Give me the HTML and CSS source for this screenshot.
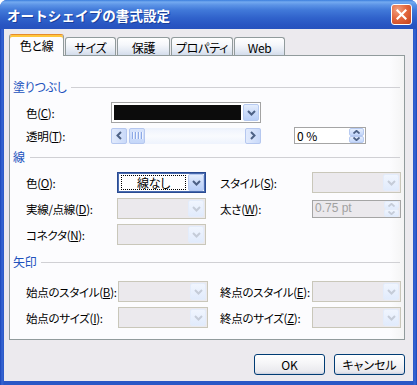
FILE: index.html
```html
<!DOCTYPE html>
<html lang="ja">
<head>
<meta charset="utf-8">
<title>オートシェイプの書式設定</title>
<link rel="stylesheet" href="styles.css">
</head>
<body>
<div class="window">
  <div class="titlebar">
    <span class="title">オートシェイプの書式設定</span>
    <div class="close">
      <svg width="11" height="11" viewBox="0 0 11 11"><path d="M1.5 1.5 L9.5 9.5 M9.5 1.5 L1.5 9.5" stroke="#fff" stroke-width="2.2" fill="none" stroke-linecap="square"/></svg>
    </div>
  </div>
  <div class="client">
    <div class="tabs">
      <div class="tab active t1">色と線</div>
      <div class="tab t2">サイズ</div>
      <div class="tab t3">保護</div>
      <div class="tab t4">プロパティ</div>
      <div class="tab t5">Web</div>
    </div>
    <div class="panel">
      <div class="heading">塗りつぶし</div>
      <div class="row fill r1">
        <span class="label">色(<u>C</u>):</span>
        <div class="combo color">
          <div class="swatch"></div>
          <div class="drop"><svg width="9" height="6" viewBox="0 0 9 6"><polyline points="1,1 4.5,4.5 8,1" fill="none" stroke="#4D6185" stroke-width="2"/></svg></div>
        </div>
      </div>
      <div class="row fill r2">
        <span class="label">透明(<u>T</u>):</span>
        <div class="scrollbar">
          <div class="sbtn"><svg width="6" height="9" viewBox="0 0 6 9"><polyline points="5,1 1.5,4.5 5,8" fill="none" stroke="#4D6185" stroke-width="2"/></svg></div>
          <div class="thumb"><i></i><i></i><i></i><i></i></div>
          <div class="track"></div>
          <div class="sbtn"><svg width="6" height="9" viewBox="0 0 6 9"><polyline points="1,1 4.5,4.5 1,8" fill="none" stroke="#4D6185" stroke-width="2"/></svg></div>
        </div>
        <span></span>
        <div class="spin">
          <span class="val">0 %</span>
          <div class="spinbtns">
            <div class="sp"><svg width="7" height="4" viewBox="0 0 7 4"><polyline points="0.5,3.5 3.5,0.8 6.5,3.5" fill="none" stroke="#4D6185" stroke-width="1.8"/></svg></div>
            <div class="sp"><svg width="7" height="4" viewBox="0 0 7 4"><polyline points="0.5,0.5 3.5,3.2 6.5,0.5" fill="none" stroke="#4D6185" stroke-width="1.8"/></svg></div>
          </div>
        </div>
      </div>

      <div class="heading h2">線</div>
      <div class="row line r1">
        <span class="label">色(<u>O</u>):</span>
        <div class="combo focus">
          <div class="field"><span class="focusrect">線なし</span></div>
          <div class="drop"><svg width="9" height="6" viewBox="0 0 9 6"><polyline points="1,1 4.5,4.5 8,1" fill="none" stroke="#4D6185" stroke-width="2"/></svg></div>
        </div>
        <span class="label">スタイル(<u>S</u>):</span>
        <div class="combo disabled">
          <div class="field"></div>
          <div class="drop"><svg width="9" height="6" viewBox="0 0 9 6"><polyline points="1,1 4.5,4.5 8,1" fill="none" stroke="#C5CCD8" stroke-width="2"/></svg></div>
        </div>
      </div>
      <div class="row line r2">
        <span class="label">実線/点線(<u>D</u>):</span>
        <div class="combo disabled">
          <div class="field"></div>
          <div class="drop"><svg width="9" height="6" viewBox="0 0 9 6"><polyline points="1,1 4.5,4.5 8,1" fill="none" stroke="#C5CCD8" stroke-width="2"/></svg></div>
        </div>
        <span class="label">太さ(<u>W</u>):</span>
        <div class="spin disabled wide">
          <span class="val">0.75 pt</span>
          <div class="spinbtns">
            <div class="sp"><svg width="7" height="4" viewBox="0 0 7 4"><polyline points="0.5,3.5 3.5,0.8 6.5,3.5" fill="none" stroke="#C5CCD8" stroke-width="1.8"/></svg></div>
            <div class="sp"><svg width="7" height="4" viewBox="0 0 7 4"><polyline points="0.5,0.5 3.5,3.2 6.5,0.5" fill="none" stroke="#C5CCD8" stroke-width="1.8"/></svg></div>
          </div>
        </div>
      </div>
      <div class="row line r2">
        <span class="label">コネクタ(<u>N</u>):</span>
        <div class="combo disabled">
          <div class="field"></div>
          <div class="drop"><svg width="9" height="6" viewBox="0 0 9 6"><polyline points="1,1 4.5,4.5 8,1" fill="none" stroke="#C5CCD8" stroke-width="2"/></svg></div>
        </div>
      </div>

      <div class="heading h3">矢印</div>
      <div class="row arrow r1">
        <span class="label">始点のスタイル(<u>B</u>):</span>
        <div class="combo disabled">
          <div class="field"></div>
          <div class="drop"><svg width="9" height="6" viewBox="0 0 9 6"><polyline points="1,1 4.5,4.5 8,1" fill="none" stroke="#C5CCD8" stroke-width="2"/></svg></div>
        </div>
        <span class="label">終点のスタイル(<u>E</u>):</span>
        <div class="combo disabled">
          <div class="field"></div>
          <div class="drop"><svg width="9" height="6" viewBox="0 0 9 6"><polyline points="1,1 4.5,4.5 8,1" fill="none" stroke="#C5CCD8" stroke-width="2"/></svg></div>
        </div>
      </div>
      <div class="row arrow r2">
        <span class="label">始点のサイズ(<u>I</u>):</span>
        <div class="combo disabled">
          <div class="field"></div>
          <div class="drop"><svg width="9" height="6" viewBox="0 0 9 6"><polyline points="1,1 4.5,4.5 8,1" fill="none" stroke="#C5CCD8" stroke-width="2"/></svg></div>
        </div>
        <span class="label">終点のサイズ(<u>Z</u>):</span>
        <div class="combo disabled">
          <div class="field"></div>
          <div class="drop"><svg width="9" height="6" viewBox="0 0 9 6"><polyline points="1,1 4.5,4.5 8,1" fill="none" stroke="#C5CCD8" stroke-width="2"/></svg></div>
        </div>
      </div>
    </div>
    <div class="buttons">
      <div class="btn">OK</div>
      <div class="btn">キャンセル</div>
    </div>
  </div>
</div>
</body>
</html>
```

FILE: styles.css
```css
* { box-sizing: border-box; }
html, body { margin: 0; padding: 0; background: #fff; }
body {
  width: 417px; height: 385px; overflow: hidden;
  font-family: "Noto Sans CJK JP", "Noto Sans", sans-serif;
  font-size: 11.5px;
  letter-spacing: -0.3px;
  font-feature-settings: "palt";
  color: #000;
}
u { text-decoration: underline; text-underline-offset: 1px; }

.window {
  width: 417px; height: 385px;
  border-radius: 7px 7px 0 0;
  background: linear-gradient(to right, #1A45B8 0, #3766D4 2px, #2A57C6 4px, #2A57C6 413px, #3766D4 415px, #1A45B8 417px);
  display: flex; flex-direction: column;
  overflow: hidden;
}
.titlebar {
  height: 29px; flex: none;
  display: flex; align-items: center;
  padding: 1px 5px 0 7px;
  background: linear-gradient(to bottom, #3A7DDD 0, #74AAF0 2px, #5B93E6 5px, #4179D9 10px, #3062CB 18px, #2855C2 25px, #2652BE 29px);
}
.title {
  flex: 1;
  color: #fff; font-weight: bold; font-size: 13.5px; letter-spacing: 0.1px;
  font-feature-settings: normal;
  text-shadow: 1px 1px 0 #1A3F9C;
  line-height: 16px;
}
.close {
  width: 21px; height: 21px;
  border: 1px solid #fff; border-radius: 3px;
  background: radial-gradient(circle at 30% 25%, #F2A080 0, #E4683F 45%, #C4411C 100%);
  display: flex; align-items: center; justify-content: center;
  margin-top: -1px;
}

.client {
  flex: 1;
  margin: 0 4px 4px 4px;
  background: #ECEAEE;
  padding: 5px 8px 0 5px;
  display: flex; flex-direction: column;
}

.tabs {
  height: 21px; flex: none;
  display: flex; align-items: flex-end;
  position: relative; z-index: 1;
}
.tab {
  height: 18px;
  border: 1px solid #919B9C; border-bottom: none;
  border-radius: 3px 3px 0 0;
  background: linear-gradient(to bottom, #FFFFFF 0, #F5F7FB 40%, #E3E9F3 75%, #D3DCEB 100%);
  display: flex; align-items: center; justify-content: center;
  padding-top: 1px;
  font-size: 12px;
}
.tab.active {
  height: 22px; margin-bottom: -1px;
  background: #FCFCFE;
  border-top: 1px solid #E68B2C;
  box-shadow: inset 0 2px 0 #FFC73C;
  padding-top: 0;
}
.t1 { width: 55px; }
.t2 { width: 51px; margin-left: 1px; }
.t3 { width: 53px; margin-left: 1px; }
.t4 { width: 62px; margin-left: 1px; }
.t5 { width: 51px; margin-left: 1px; }

.panel {
  width: 396px; height: 285px; flex: none;
  border: 1px solid #919B9C;
  background: linear-gradient(to right, #FCFCFE 0, #FCFCFE 380px, #F4F4F4 394px);
  padding: 24px 4px 0 3px;
  display: flex; flex-direction: column;
}
.heading {
  height: 14px; line-height: 14px;
  display: flex; align-items: center; gap: 5px;
  color: #2152BD;
  font-size: 12px;
}
.heading::after { content: ""; flex: 1; height: 1px; background: #D0D0D4; margin-top: 1px; }
.h2 { margin-top: 4px; }
.h3 { margin-top: 10px; }

.row {
  display: grid; height: 21px; align-items: center;
  margin-left: 1px;
}
.row .label { padding-left: 12px; white-space: nowrap; line-height: 14px; }
.fill { grid-template-columns: 97px 150px 33px 72px; }
.fill.r1 { margin-top: 8px; }
.fill.r2 { margin-top: 2px; }
.line { grid-template-columns: 103px 89px 106px 89px; }
.line .label:nth-of-type(2) { padding-left: 14px; }
.line.r1 { margin-top: 8px; }
.line.r2 { margin-top: 5px; }
.arrow { grid-template-columns: 104px 90px 104px 89px; }
.arrow .label:nth-of-type(2) { padding-left: 12px; }
.arrow.r1 { margin-top: 12px; }
.arrow.r2 { margin-top: 5px; }

.combo {
  height: 21px;
  display: flex;
  border: 1px solid #A5ACB2;
  background: #fff;
  padding: 1px 0 1px 1px;
}
.combo .field { flex: 1; }
.drop {
  width: 16px; flex: none;
  border: 1px solid #B7CAF1; border-radius: 2px;
  background: linear-gradient(to bottom, #E5EEFD 0, #CCDCFA 50%, #B9CFF8 100%);
  display: flex; align-items: center; justify-content: center;
}
.combo.color { padding: 2px 1px 2px 2px; border-color: #A3A3A3; }
.combo.color .swatch { flex: 1; background: #0C0C0C; margin-right: 2px; }
.combo.color .drop { margin: -1px 0; }

.combo.focus { border: 1px solid #2A4B92; box-shadow: inset 0 0 0 1px #4A6CB0; padding: 2px 1px 2px 2px; }
.combo.focus .field {
  display: flex; align-items: center; justify-content: center;
  padding: 0 2px 0 1px;
}
.focusrect {
  display: flex; align-items: center; justify-content: center;
  width: 100%; height: 100%;
  border: 1px dotted #000;
  line-height: 12px;
  font-size: 12px;
}
.combo.focus .drop { margin: -1px 0; }

.combo.disabled { border-color: #C9C7BA; background: #EBE9ED; padding: 1px; }
.combo.disabled .drop {
  border-color: #E3ECFB;
  background: linear-gradient(to bottom, #F0F5FE 0, #E1EBFC 100%);
}

.scrollbar {
  height: 16px;
  display: flex;
  background: linear-gradient(to bottom, #EEF3FD 0, #F9FBFE 50%, #EEF3FD 100%);
}
.scrollbar .track { flex: 1; }
.sbtn, .thumb {
  width: 16px;
  border: 1px solid #B5C7EF; border-radius: 2px;
  background: linear-gradient(to right, #E2EBFD 0, #C9D9F9 100%);
  display: flex; align-items: center; justify-content: center;
}
.thumb { width: 16px; margin-left: 2px; gap: 1px; background: linear-gradient(to bottom, #D9E5FC 0, #C5D7F9 100%); }
.thumb i { width: 1px; height: 7px; background: #8DA9E6; box-shadow: 1px 0 0 #F1F5FD; margin-right: 1px; }

.spin {
  height: 17px;
  display: flex; align-items: center;
  border: 1px solid #A5A5A5;
  background: #fff;
  padding: 0 1px 0 2px;
}
.spin .val { flex: 1; line-height: 13px; font-size: 12px; letter-spacing: 0; }
.spinbtns { width: 15px; height: 15px; display: flex; flex-direction: column; }
.sp {
  flex: 1;
  border: 1px solid #B7CAF1; border-radius: 2px;
  background: linear-gradient(to bottom, #E5EEFD 0, #C3D6FA 100%);
  display: flex; align-items: center; justify-content: center;
}
.spin.disabled { height: 18px; background: #EBE9ED; border-color: #A5A5A5; }
.spin.disabled .val { color: #A1A1A1; font-family: "Liberation Sans", Arial, sans-serif; font-size: 12px; }
.spin.disabled .spinbtns { height: 16px; }
.spin.disabled .sp { border-color: #E3ECFB; background: linear-gradient(to bottom, #F0F5FE 0, #E1EBFC 100%); }

.buttons {
  display: flex; justify-content: flex-end; gap: 9px;
  margin-top: 14px;
}
.btn {
  width: 71px; height: 21px;
  border: 1px solid #003C74; border-radius: 3px;
  background: linear-gradient(to bottom, #FFFFFF 0, #F6F6F8 40%, #EAEAEE 85%, #D6D9E4 100%);
  box-shadow: inset 0 -1px 0 #CFD3E0;
  display: flex; align-items: center; justify-content: center;
  line-height: 14px;
  font-size: 12px;
  letter-spacing: 0;
}
```
